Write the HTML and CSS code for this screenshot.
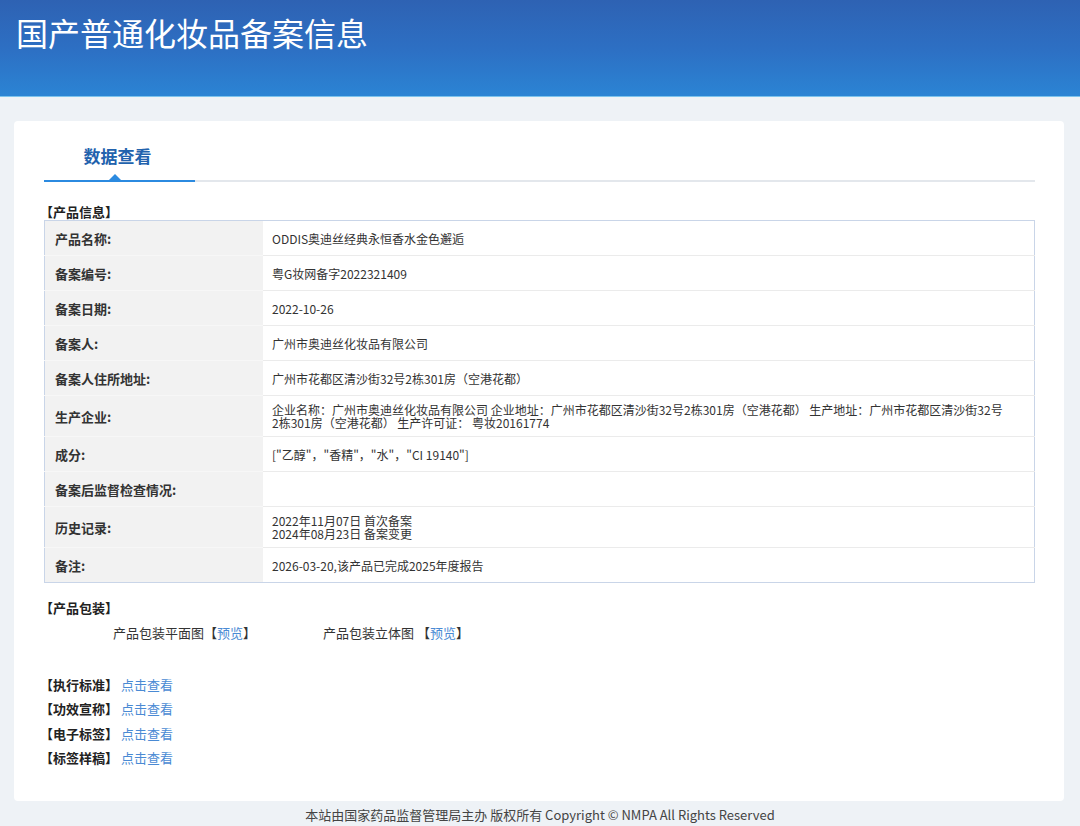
FILE: index.html
```html
<!DOCTYPE html>
<html lang="zh-CN">
<head>
    <meta charset="UTF-8">
    <meta name="viewport" content="width=device-width, initial-scale=1.0">
    <title>国产普通化妆品备案信息</title>
    <link rel="stylesheet" href="styles.css">
</head>
<body>
    <div class="banner">
        <h1>国产普通化妆品备案信息</h1>
    </div>

    <div class="main-card">
        <div class="tabs">
            <div class="tab active">数据查看</div>
        </div>

        <div class="block-title">【产品信息】</div>
        <table class="info-table">
            <tr class="first">
                <td class="label">产品名称:</td>
                <td class="value">ODDIS奥迪丝经典永恒香水金色邂逅</td>
            </tr>
            <tr>
                <td class="label">备案编号:</td>
                <td class="value">粤G妆网备字2022321409</td>
            </tr>
            <tr>
                <td class="label">备案日期:</td>
                <td class="value">2022-10-26</td>
            </tr>
            <tr>
                <td class="label">备案人:</td>
                <td class="value">广州市奥迪丝化妆品有限公司</td>
            </tr>
            <tr>
                <td class="label">备案人住所地址:</td>
                <td class="value">广州市花都区清沙街32号2栋301房（空港花都）</td>
            </tr>
            <tr class="tall">
                <td class="label">生产企业:</td>
                <td class="value">企业名称：广州市奥迪丝化妆品有限公司 企业地址：广州市花都区清沙街32号2栋301房（空港花都） 生产地址：广州市花都区清沙街32号2栋301房（空港花都） 生产许可证： 粤妆20161774</td>
            </tr>
            <tr>
                <td class="label">成分:</td>
                <td class="value">["乙醇"，"香精"，"水"，"CI 19140"]</td>
            </tr>
            <tr>
                <td class="label">备案后监督检查情况:</td>
                <td class="value"></td>
            </tr>
            <tr class="tall">
                <td class="label">历史记录:</td>
                <td class="value history">2022年11月07日 首次备案
2024年08月23日 备案变更</td>
            </tr>
            <tr>
                <td class="label">备注:</td>
                <td class="value">2026-03-20,该产品已完成2025年度报告</td>
            </tr>
        </table>

        <div class="block-title pack-title">【产品包装】</div>
        <div class="pack-row">
            <div class="pack-item">产品包装平面图【<a href="#">预览</a>】</div>
            <div class="pack-item">产品包装立体图 【<a href="#">预览</a>】</div>
        </div>

        <ul class="doc-links">
            <li><b>【执行标准】</b><a href="#">点击查看</a></li>
            <li><b>【功效宣称】</b><a href="#">点击查看</a></li>
            <li><b>【电子标签】</b><a href="#">点击查看</a></li>
            <li><b>【标签样稿】</b><a href="#">点击查看</a></li>
        </ul>
    </div>

    <div class="footer">本站由国家药品监督管理局主办 版权所有 Copyright © NMPA All Rights Reserved</div>
</body>
</html>
```

FILE: styles.css
```css
body {
    font-family: "Noto Sans CJK SC", "Open Sans", sans-serif;
    background: #eef2f6;
    margin: 0;
    padding: 0;
    color: #333;
}
a {
    color: #4a8ad4;
    text-decoration: none;
}
.banner {
    height: 96px;
    background: linear-gradient(180deg, #2e62b3 0%, #2d6fc3 50%, #2b84d4 100%);
    border-bottom: 1px solid #7cc3ec;
}
.banner h1 {
    margin: 0;
    padding: 10px 0 0 16px;
    color: #fff;
    font-size: 32px;
    font-weight: normal;
    line-height: 44px;
}
.main-card {
    background: #fff;
    margin: 24px 16px 0 14px;
    padding: 23px 29px 31px 30px;
    border-radius: 4px;
}
.tabs {
    display: flex;
    border-bottom: 2px solid #e3e7ec;
}
.tab {
    width: 147px;
    padding-bottom: 12px;
    text-align: center;
    font-size: 17px;
    line-height: 24px;
    font-weight: bold;
    color: #2262ad;
}
.tab.active {
    padding-right: 4px;
    border-bottom: 2px solid #2b8ae0;
    margin-bottom: -2px;
    position: relative;
}
.tab.active::after {
    content: "";
    position: absolute;
    left: 65px;
    bottom: 0;
    border-left: 6px solid transparent;
    border-right: 6px solid transparent;
    border-bottom: 6px solid #2b8ae0;
}
.block-title {
    margin-top: 22px;
    font-size: 13px;
    line-height: 16px;
    font-weight: bold;
    color: #222;
    margin-left: -4px;
}
.info-table {
    width: 100%;
    border-collapse: collapse;
    border: 1px solid #c9d5e8;
    font-size: 12px;
}
.info-table td {
    height: 34px;
    padding: 0 10px;
    border-top: 1px solid #ebebeb;
}
.info-table tr.first td {
    height: 34px;
    border-top: none;
}
.info-table tr.tall td {
    height: 40px;
}
.info-table .label {
    width: 198px;
    background: #f2f2f2;
    font-size: 13px;
    font-weight: bold;
    color: #333;
    border-top-color: #f7f7f7;
}
.info-table .value {
    padding-left: 9px;
    padding-right: 28px;
    line-height: 13px;
    color: #333;
}
.info-table .history {
    white-space: pre-line;
}
.pack-title {
    margin-top: 17px;
}
.pack-row {
    display: grid;
    grid-template-columns: 210px 210px;
    padding-left: 69px;
    margin-top: 7px;
    font-size: 13px;
    line-height: 20px;
}
.doc-links {
    list-style: none;
    margin: 30px 0 0 -4px;
    padding: 0;
    font-size: 13px;
    line-height: 24.3px;
}
.doc-links b {
    color: #222;
    margin-right: 3px;
}
.footer {
    text-align: center;
    font-size: 13px;
    line-height: 28px;
    color: #444;
}
```
